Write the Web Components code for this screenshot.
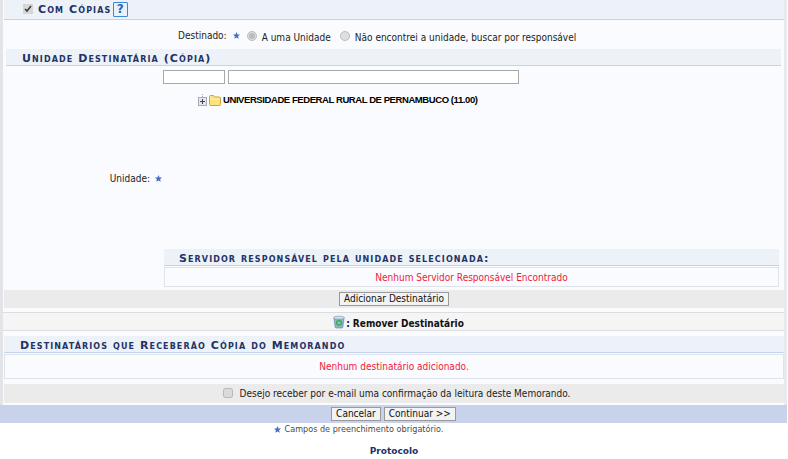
<!DOCTYPE html>
<html lang="pt"><head><meta charset="utf-8"><title>Com Cópias</title>
<style>
html,body{margin:0;padding:0;background:#fff}
body{font:10px "DejaVu Sans Condensed","DejaVu Sans",sans-serif;font-stretch:condensed;color:#222;width:788px;height:459px;overflow:hidden}
</style></head><body>
<memo-page></memo-page>
<script>
const STAR='<svg width="7" height="7" viewBox="0 0 10 10"><path d="M5 0l1.500 3.400 3.500.3-2.700 2.300.9 3.600L5 7.700 1.800 9.600l.9-3.600L0 3.700l3.500-.3z" fill="#4a6fc4"/></svg>';
const COND='"DejaVu Sans Condensed","DejaVu Sans",sans-serif';
function def(name,css,html){
  customElements.define(name,class extends HTMLElement{
    constructor(){super();const s=this.attachShadow({mode:'open'});s.innerHTML='<style>'+css+'</style>'+html;}
  });
}
def('req-star',':host{display:inline-flex;align-items:center;width:7px;height:7px}svg{display:block}',STAR);
def('sec-caption',`:host{display:block;box-sizing:border-box;background:#edf1f8;border-bottom:1px solid #c4d2eb;
  font:small-caps bold 11px/19px "DejaVu Sans",sans-serif;letter-spacing:1.1px;color:#223366;height:17px;padding-left:var(--pad,16px)}`,'<slot></slot>');
def('sipac-btn',`:host{display:inline-block}
  button{display:block;box-sizing:border-box;height:14px;margin:0;padding:0 4px;background:#f3f3f3;border:1px solid #999;border-radius:0;
  font:10px/12px ${COND};font-stretch:condensed;color:#111;white-space:nowrap}`,'<button type="button"><slot></slot></button>');
def('empty-note',`:host{display:flex;align-items:center;justify-content:center;box-sizing:border-box;background:#fafbfe;
  border:1px solid #dfe3ea;color:#f0203c;font:10px ${COND};font-stretch:condensed}`,'<slot></slot>');
def('grey-row',`:host{display:flex;align-items:center;justify-content:center;background:#ebebeb;box-sizing:border-box}`,'<slot></slot>');
def('tree-node',`:host{display:flex;align-items:center;height:14px;font:bold 9.500px/14px "Liberation Sans",Arial,sans-serif;letter-spacing:-.42px;color:#000}
  svg{display:block;flex:none}`,
  `<svg width="10" height="13" viewBox="0 0 10 13" style="margin-right:1px"><path d="M4.500 0v3" stroke="#aab" stroke-dasharray="1 1"/><rect x=".5" y="3.500" width="8" height="8" fill="#e3e6ec" stroke="#a4acba"/><path d="M2 7.500h5M4.500 5v5" stroke="#445"/></svg>
   <svg width="12" height="11" viewBox="0 0 12 11" style="margin-right:2px"><path d="M.5 2.500V1.500q0-1 1-1h3l1 1.500h5q1 0 1 1v6.500q0 1-1 1h-9q-1 0-1-1z" fill="#ffe27a" stroke="#c9a441"/><path d="M1 4h10" stroke="#fff3b8"/></svg>
   <slot></slot>`);
def('help-icon',`:host{display:inline-block;box-sizing:border-box;width:15px;height:15px;border:1.500px solid #3d86d8;background:#e9f1fb;border-radius:1px;
  color:#1f66bd;font:bold 12px/12px "DejaVu Sans",sans-serif;text-align:center}`,'?');
def('radio-opt',`:host{display:inline-flex;align-items:center}
  input{margin:0 5px 2px 0;width:10px;height:10px;flex:none;filter:brightness(.86)}
  span{font:10px ${COND};font-stretch:condensed;color:#222;position:relative;top:1px}`,'<input type="radio" name="d" disabled><span><slot></slot></span>');
def('memo-page',`
  :host{display:block;width:788px;height:459px;font:10px ${COND};font-stretch:condensed;color:#222}
  *{box-sizing:border-box}
  .panel{background:#fafbfe;border-left:3px solid #e2e4e8;border-right:3px solid #e8eaee;width:787px;height:405px;display:flex;flex-direction:column}
  .top{display:flex;align-items:center;height:20px;background:#edf1f8;border-bottom:1px solid #c4d2eb;margin-left:1px;padding-left:19px;
    font:small-caps bold 11px "DejaVu Sans",sans-serif;letter-spacing:1.1px;color:#223366}
  .top input{margin:0 5px 1px 0;width:10px;height:10px;accent-color:#d8d8d8}
  .top help-icon{margin-left:2px;margin-top:-1px}
  .dest{display:flex;align-items:center;height:29px;padding:4px 0 0 175px}
  .dest .l{margin-right:6px;margin-bottom:2px}
  .dest req-star{margin-right:7px;margin-bottom:2px}
  .dest radio-opt{margin-right:9px}
  .cap1{margin:0 3px 0 3px;--pad:16px}
  .form{display:grid;grid-template-columns:160px 1fr;height:221px}
  .lab{display:flex;align-items:center;justify-content:flex-end;gap:5px;padding:3px 1px 0 0}
  .inputs{display:flex;gap:3px;padding:4px 0 0 0;height:18px}
  .inputs i{display:block;height:14px;background:#fff;border:1px solid #a9a9a9}
  .i1{width:62px}.i2{width:291px}
  .tree{margin:9px 0 0 35px}
  .fc{display:flex;flex-direction:column;height:221px}
  .fill{flex:1}
  .cap2{margin-left:1px;margin-right:5px;--pad:15px}
  .note1{height:20px;margin:1px 5px 0 1px}
  .add{height:18px;margin:3px 0 0 1px}
  .rem{display:flex;align-items:center;justify-content:center;height:19px;margin-top:4px;padding:0 0 0 10px;background:#f5f5f5;border-top:1px solid #ddd;border-bottom:1px solid #ddd;
    font:bold 10px ${COND};font-stretch:condensed;color:#111}
  .rem span{position:relative;top:2px}
  .rem svg{margin-right:1px}
  .cap3{margin:5px 0 0 1px;--pad:16px}
  .note2{height:25px;margin:1px 0 0 1px}
  .mail{height:19px;margin:5px 0 0 1px;padding-left:5px}
  .mail input{margin:0 7px 2px 0;width:10px;height:10px;filter:brightness(.86)}
  .bottom{display:flex;align-items:center;justify-content:center;gap:3px;height:18px;width:787px;background:#c8d3eb}
  .foot{display:flex;justify-content:center;align-items:center;gap:4px;height:12px;padding-right:71px;font-size:9px;color:#4a4a4a}
  .proto{text-align:center;font:bold 9px "DejaVu Sans",sans-serif;color:#223366;margin-top:11px}
  `,`
  <div class="panel">
    <div class="top"><input type="checkbox" checked><span>Com Cópias</span><help-icon></help-icon></div>
    <div class="dest"><span class="l">Destinado:</span><req-star></req-star><radio-opt id="r1">A uma Unidade</radio-opt><radio-opt>Não encontrei a unidade, buscar por responsável</radio-opt></div>
    <sec-caption class="cap1">Unidade Destinatária (Cópia)</sec-caption>
    <div class="form">
      <div class="lab"><span>Unidade:</span><req-star></req-star></div>
      <div class="fc">
        <div class="inputs"><i class="i1"></i><i class="i2"></i></div>
        <tree-node class="tree">UNIVERSIDADE FEDERAL RURAL DE PERNAMBUCO (11.00)</tree-node>
        <div class="fill"></div>
        <sec-caption class="cap2">Servidor responsável pela unidade selecionada:</sec-caption>
        <empty-note class="note1">Nenhum Servidor Responsável Encontrado</empty-note>
      </div>
    </div>
    <grey-row class="add"><sipac-btn>Adicionar Destinatário</sipac-btn></grey-row>
    <div class="rem"><svg width="12" height="14" viewBox="0 0 14 15"><path d="M1 2.500h12L11.500 13.500q-.2 1-1.200 1H3.700q-1 0-1.200-1z" fill="#8fb4d6" stroke="#5b7f9f" stroke-width=".7"/><ellipse cx="7" cy="2.500" rx="6.300" ry="1.800" fill="#d4e2ee" stroke="#6f8fab" stroke-width=".7"/><circle cx="7" cy="8.500" r="2.800" fill="none" stroke="#3fae4a" stroke-width="1.600"/></svg><span>: Remover Destinatário</span></div>
    <sec-caption class="cap3">Destinatários que Receberão Cópia do Memorando</sec-caption>
    <empty-note class="note2">Nenhum destinatário adicionado.</empty-note>
    <grey-row class="mail"><input type="checkbox" disabled><span>Desejo receber por e-mail uma confirmação da leitura deste Memorando.</span></grey-row>
  </div>
  <div class="bottom"><sipac-btn>Cancelar</sipac-btn><sipac-btn>Continuar &gt;&gt;</sipac-btn></div>
  <div class="foot"><req-star></req-star><span>Campos de preenchimento obrigatório.</span></div>
  <div class="proto">Protocolo</div>`);
document.querySelector('memo-page').shadowRoot.querySelector('#r1').shadowRoot.querySelector('input').checked=true;
</script>
</body></html>
